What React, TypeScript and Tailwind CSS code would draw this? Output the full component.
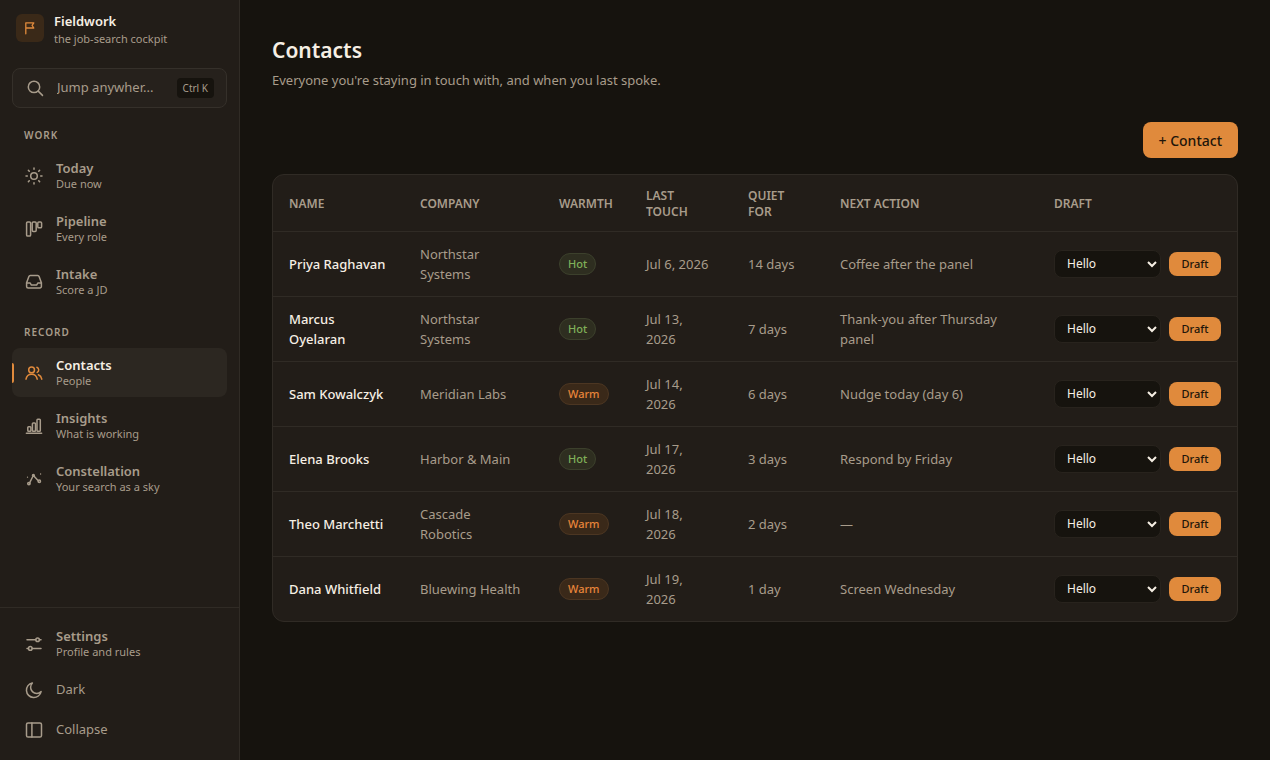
import { useState, type ReactNode } from 'react';

type Warmth = 'Hot' | 'Warm';

interface Contact {
  name: string;
  company: string;
  warmth: Warmth;
  last: string;
  quiet: string;
  next: string;
}

const contacts: Contact[] = [
  { name: 'Priya Raghavan', company: 'Northstar Systems', warmth: 'Hot', last: 'Jul 6, 2026', quiet: '14 days', next: 'Coffee after the panel' },
  { name: 'Marcus Oyelaran', company: 'Northstar Systems', warmth: 'Hot', last: 'Jul 13, 2026', quiet: '7 days', next: 'Thank-you after Thursday panel' },
  { name: 'Sam Kowalczyk', company: 'Meridian Labs', warmth: 'Warm', last: 'Jul 14, 2026', quiet: '6 days', next: 'Nudge today (day 6)' },
  { name: 'Elena Brooks', company: 'Harbor & Main', warmth: 'Hot', last: 'Jul 17, 2026', quiet: '3 days', next: 'Respond by Friday' },
  { name: 'Theo Marchetti', company: 'Cascade Robotics', warmth: 'Warm', last: 'Jul 18, 2026', quiet: '2 days', next: '—' },
  { name: 'Dana Whitfield', company: 'Bluewing Health', warmth: 'Warm', last: 'Jul 19, 2026', quiet: '1 day', next: 'Screen Wednesday' },
];

function Icon({ children }: { children: ReactNode }) {
  return (
    <svg
      viewBox="0 0 20 20"
      className="size-5 shrink-0"
      fill="none"
      stroke="currentColor"
      strokeWidth="1.5"
      strokeLinecap="round"
      strokeLinejoin="round"
      aria-hidden="true"
    >
      {children}
    </svg>
  );
}

const icons = {
  flag: (
    <Icon>
      <path d="M5.800 15.800V4.800h8l-1.700 2.600 1.700 2.600h-8" strokeWidth="1.300" />
    </Icon>
  ),
  search: (
    <Icon>
      <circle cx="9" cy="8.900" r="5.700" />
      <path d="m13.200 13.100 4.300 4.300" />
    </Icon>
  ),
  today: (
    <Icon>
      <circle cx="10" cy="10" r="3.300" />
      <path d="M10 2v1.300M10 16.700V18M2 10h1.300M16.700 10H18M4.400 4.400l.9.9M14.700 14.700l.9.9M4.400 15.600l.9-.9M14.700 5.300l.9-.9" />
    </Icon>
  ),
  pipeline: (
    <Icon>
      <rect x="2.600" y="3" width="4" height="14" rx="1.100" />
      <rect x="8.200" y="3" width="4" height="9.400" rx="1.100" />
      <rect x="13.800" y="3" width="3.800" height="5.800" rx="1.100" />
    </Icon>
  ),
  intake: (
    <Icon>
      <path d="M2.600 10.700 4.900 4.500a1.500 1.500 0 0 1 1.400-1h7.400a1.500 1.500 0 0 1 1.400 1l2.300 6.200v3.800a1.500 1.500 0 0 1-1.500 1.500H4.100a1.500 1.500 0 0 1-1.500-1.500z" />
      <path d="M2.600 11h3.600l1.200 2.100h5.200l1.200-2.100h3.600" />
    </Icon>
  ),
  contacts: (
    <Icon>
      <circle cx="7.600" cy="6.900" r="2.900" />
      <path d="M2 16.200c.5-3.100 2.700-5 5.600-5s5.100 1.900 5.600 5M12.900 4.300a2.800 2.800 0 0 1 .3 5.100M14.400 11.800c1.800.7 3 2.300 3.400 4.400" />
    </Icon>
  ),
  insights: (
    <Icon>
      <path d="M2.400 17.300h15.200" />
      <rect x="3.800" y="10.700" width="3.100" height="4.500" rx=".8" />
      <rect x="8.400" y="6.900" width="3.100" height="8.300" rx=".8" />
      <rect x="13" y="3.300" width="3.300" height="11.900" rx=".8" />
    </Icon>
  ),
  constellation: (
    <Icon>
      <path d="m5.500 14.200 3.300-6.700M10.100 7.300l4.400 4.600" />
      <circle cx="4.900" cy="14.600" r="1.200" />
      <circle cx="9.400" cy="6.400" r=".9" />
      <circle cx="15.300" cy="12.300" r="1.200" />
      <path d="M3.500 8.200h.01M16.600 5h.01" strokeWidth="1.300" />
    </Icon>
  ),
  settings: (
    <Icon>
      <path d="M3 5.800h8.800M15.400 5.800H17M3 14.400h1.500M8.200 14.400H17" />
      <circle cx="13.600" cy="5.800" r="1.800" />
      <circle cx="6.300" cy="14.400" r="1.800" />
    </Icon>
  ),
  moon: (
    <Icon>
      <path d="M17.100 11.600A7.400 7.400 0 1 1 8.400 2.900a5.900 5.900 0 0 0 8.700 8.700z" />
    </Icon>
  ),
  panel: (
    <Icon>
      <rect x="2.500" y="3" width="15" height="14" rx="1.600" />
      <path d="M7.900 3v14" />
    </Icon>
  ),
};

interface NavItemProps {
  icon: ReactNode;
  title: string;
  sub: string;
  active?: boolean;
}

function NavItem({ icon, title, sub, active = false }: NavItemProps) {
  return (
    <a
      href="#"
      aria-current={active ? 'page' : undefined}
      className={
        active
          ? 'relative flex h-[49px] items-center gap-3 rounded-lg bg-[#2c2721] px-3'
          : 'relative flex h-[49px] items-center gap-3 rounded-lg px-3 hover:bg-[#2c2721]'
      }
    >
      {active && <span className="absolute left-0 h-5 w-0.5 rounded-r-full bg-[#e08a3c]" />}
      <span className={active ? 'text-[#e08a3c]' : ''}>{icon}</span>
      <span className="flex flex-col pt-px">
        <span className={active ? 'text-[13px] leading-4 font-semibold text-[#f6efe4]' : 'text-[13px] leading-4 font-semibold'}>
          {title}
        </span>
        <span className="text-[11px] leading-4">{sub}</span>
      </span>
    </a>
  );
}

function NavGroup({ label, children }: { label: string; children: ReactNode }) {
  return (
    <section className="mt-[18px]">
      <h2 className="mb-2 px-3 text-[10px] leading-4 font-semibold tracking-widest uppercase">{label}</h2>
      <nav aria-label={label} className="flex flex-col gap-1">
        {children}
      </nav>
    </section>
  );
}

function Sidebar() {
  return (
    <aside className="sticky top-0 flex h-screen w-60 shrink-0 flex-col border-r border-[#302b25] bg-[#221d18] text-[#a89c8b]">
      <div className="flex flex-1 flex-col overflow-hidden px-3">
        <div className="flex items-start gap-2.5 px-1 pt-3">
          <span className="mt-0.5 flex size-7 items-center justify-center rounded-md bg-[#3a2918] text-[#e08a3c]">
            {icons.flag}
          </span>
          <span className="flex flex-col">
            <span className="text-[13px] leading-[18px] font-semibold text-[#f6efe4]">Fieldwork</span>
            <span className="text-[11px] leading-[18px]">the job-search cockpit</span>
          </span>
        </div>
        <button
          type="button"
          className="mt-5 mb-px flex h-10 w-full shrink-0 items-center gap-3 rounded-lg border border-[#35302a] bg-[#26211c] px-3 text-left"
        >
          {icons.search}
          <span className="min-w-0 flex-1 truncate text-[13px]">Jump anywher...</span>
          <kbd className="ml-1 rounded bg-[#16130e] px-1.5 font-['Noto_Sans',sans-serif] text-[10px] leading-5">Ctrl K</kbd>
        </button>
        <NavGroup label="Work">
          <NavItem icon={icons.today} title="Today" sub="Due now" />
          <NavItem icon={icons.pipeline} title="Pipeline" sub="Every role" />
          <NavItem icon={icons.intake} title="Intake" sub="Score a JD" />
        </NavGroup>
        <NavGroup label="Record">
          <NavItem icon={icons.contacts} title="Contacts" sub="People" active />
          <NavItem icon={icons.insights} title="Insights" sub="What is working" />
          <NavItem icon={icons.constellation} title="Constellation" sub="Your search as a sky" />
        </NavGroup>
      </div>
      <div className="flex flex-col gap-1 border-t border-[#302b25] px-3 pt-[11px] pb-3">
        <NavItem icon={icons.settings} title="Settings" sub="Profile and rules" />
        <button type="button" className="flex h-9 items-center gap-3 rounded-lg px-3 text-[13px]">
          {icons.moon}
          Dark
        </button>
        <button type="button" className="flex h-9 items-center gap-3 rounded-lg px-3 text-[13px]">
          {icons.panel}
          Collapse
        </button>
      </div>
    </aside>
  );
}

function WarmthPill({ warmth }: { warmth: Warmth }) {
  return (
    <span
      className={
        warmth === 'Hot'
          ? 'inline-block rounded-full border border-[#3c402c] bg-[#2e2e20] px-2 text-[11px] leading-5 font-medium text-[#7fb058]'
          : 'inline-block rounded-full border border-[#4c3622] bg-[#3a2919] px-2 text-[11px] leading-5 font-medium text-[#e8853a]'
      }
    >
      {warmth}
    </span>
  );
}

function ContactRow({ contact }: { contact: Contact }) {
  const [template, setTemplate] = useState('Hello');
  return (
    <tr className="h-[65px] border-t border-[#302b25]">
      <td className="px-4 font-medium text-[#f6efe4]">{contact.name}</td>
      <td className="pr-5 pl-4">{contact.company}</td>
      <td className="pr-5 pl-4">
        <WarmthPill warmth={contact.warmth} />
      </td>
      <td className="pr-5 pl-4">{contact.last}</td>
      <td className="pr-5 pl-4">{contact.quiet}</td>
      <td className="pr-5 pl-4">{contact.next}</td>
      <td className="px-4">
        <div className="flex items-center gap-2">
          <select
            aria-label={`Draft template for ${contact.name}`}
            value={template}
            onChange={(e) => setTemplate(e.target.value)}
            className="h-7 min-w-0 flex-1 rounded-lg border border-[#28231d] bg-[#16130e] px-2 text-[12px] text-[#f6efe4]"
          >
            <option>Hello</option>
            <option>Follow-up</option>
            <option>Thank-you</option>
          </select>
          <button type="button" className="h-6 w-[52px] rounded-lg bg-[#e08a3c] text-[11px] font-medium text-[#20150a]">
            Draft
          </button>
        </div>
      </td>
    </tr>
  );
}

export default function App() {
  return (
    <div className="flex min-h-screen bg-[#16130e] font-['Noto_Sans',sans-serif] text-[#a89c8b]">
      <Sidebar />
      <main className="min-w-0 flex-1 px-8 pt-8 pb-8">
        <h1 className="text-[21px] leading-9 font-semibold text-[#f6efe4]">Contacts</h1>
        <p className="mt-0.5 text-[13px] leading-5">Everyone you're staying in touch with, and when you last spoke.</p>
        <div className="mt-8 flex justify-end">
          <button type="button" className="h-9 rounded-lg bg-[#e08a3c] px-4 text-[14px] font-medium text-[#20150a]">
            + Contact
          </button>
        </div>
        <div className="mt-4 overflow-hidden rounded-xl border border-[#302b25] bg-[#221d18]">
          <table className="w-full table-fixed text-left text-[13px] leading-5">
            <colgroup>
              <col className="w-[131px]" />
              <col className="w-[139px]" />
              <col className="w-[87px]" />
              <col className="w-[102px]" />
              <col className="w-[92px]" />
              <col className="w-[214px]" />
              <col className="w-[199px]" />
            </colgroup>
            <thead>
              <tr className="h-14 text-[12px] leading-4 uppercase">
                <th className="px-4 pt-0.5 font-semibold">Name</th>
                <th className="pt-0.5 pr-5 pl-4 font-semibold">Company</th>
                <th className="pt-0.5 pr-5 pl-4 font-semibold">Warmth</th>
                <th className="pt-0.5 pr-5 pl-4 font-semibold">Last touch</th>
                <th className="pt-0.5 pr-5 pl-4 font-semibold">Quiet for</th>
                <th className="pt-0.5 pr-5 pl-4 font-semibold">Next action</th>
                <th className="px-4 pt-0.5 font-semibold">Draft</th>
              </tr>
            </thead>
            <tbody>
              {contacts.map((contact) => (
                <ContactRow key={contact.name} contact={contact} />
              ))}
            </tbody>
          </table>
        </div>
      </main>
    </div>
  );
}
